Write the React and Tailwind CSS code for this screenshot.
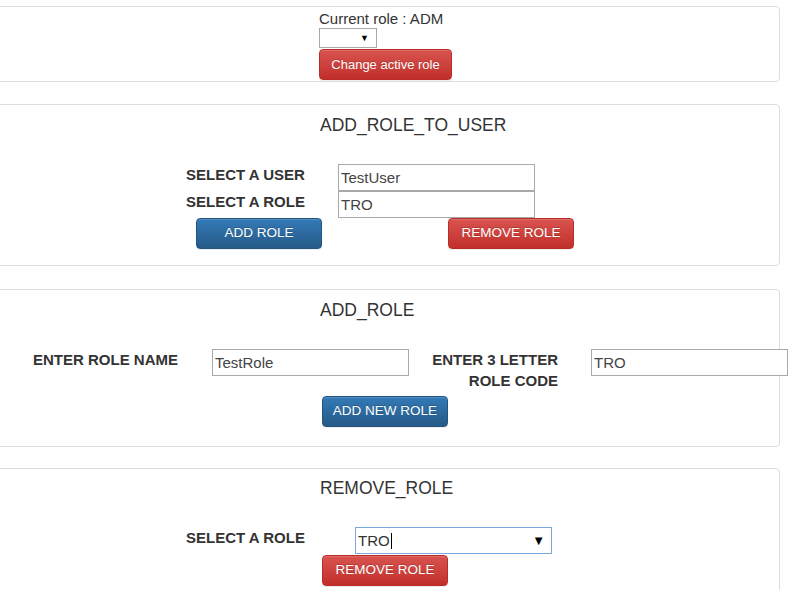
import React from 'react';

const btnBase =
  'shrink-0 h-[31px] w-[126px] rounded-[4px] border text-white text-[13.5px] flex items-center justify-center shadow-[inset_0_1px_0_rgba(255,255,255,0.15),0_1px_1px_rgba(0,0,0,0.075)] [text-shadow:0_-1px_0_rgba(0,0,0,0.2)]';
const red = 'bg-linear-to-b from-[#d9534f] to-[#c12e2a] border-[#b92c28]';
const blue = 'bg-linear-to-b from-[#337ab7] to-[#265a88] border-[#245580]';

const panel = 'ml-[-13px] w-[793px] border border-[#dddddd] rounded-[4px] pl-[12px]';
const field =
  'shrink-0 h-[27px] w-[197px] border border-[#a9a9a9] bg-white px-[2px] text-[15px] leading-[25px] text-[#444]';
const label = 'text-[15px] font-bold text-[#333] leading-[27px]';
const title = 'ml-[320px] text-[17.5px] leading-[20px] text-[#333]';

const App = () => {
  return (
    <div className="min-h-screen bg-white pt-[6px] font-['Liberation_Sans',Arial,sans-serif] text-[#333] overflow-hidden">
      {/* active role */}
      <div className={`${panel} h-[76px] pt-[2px] mb-[22px]`}>
        <div className="ml-[319px] flex flex-col items-start">
          <div className="text-[15px] leading-[19px]">Current role : ADM</div>
          <div className="relative h-[20px] w-[58px] border border-[#a9a9a9] bg-white">
            <span className="absolute right-[7px] top-[3px] text-[9px] leading-[12px] text-black">▼</span>
          </div>
          <button className={`${btnBase} ${red} mt-[1px] w-[133px] text-[13px]`}>Change active role</button>
        </div>
      </div>

      {/* add role to user */}
      <div className={`${panel} pt-[10px] pb-[16px] mb-[23px]`}>
        <div className={title}>ADD_ROLE_TO_USER</div>
        <div className="mt-[26px] ml-[186px] flex items-start">
          <div className="shrink-0 w-[152px] flex flex-col">
            <div className={label}>SELECT A USER</div>
            <div className={`${label} -mt-[0.5px]`}>SELECT A ROLE</div>
          </div>
          <div className="mt-[3px] flex flex-col">
            <div className={field}>TestUser</div>
            <div className={field}>TRO</div>
          </div>
        </div>
        <div className="ml-[196px] flex">
          <button className={`${btnBase} ${blue}`}>ADD ROLE</button>
          <button className={`${btnBase} ${red} ml-[126px]`}>REMOVE ROLE</button>
        </div>
      </div>

      {/* add role */}
      <div className={`${panel} pt-[10px] pb-[19px] mb-[21px]`}>
        <div className={title}>ADD_ROLE</div>
        <div className="mt-[29px] ml-[33px] flex items-start">
          <div className="shrink-0 w-[179px] text-[15px] font-bold leading-[21px]">ENTER ROLE NAME</div>
          <div className={field}>TestRole</div>
          <div className="shrink-0 w-[149px] text-right text-[15px] font-bold leading-[21px]">
            ENTER 3 LETTER ROLE CODE
          </div>
          <div className={`${field} ml-[33px]`}>TRO</div>
        </div>
        <div className="mt-[5px] ml-[322px]">
          <button className={`${btnBase} ${blue}`}>ADD NEW ROLE</button>
        </div>
      </div>

      {/* remove role */}
      <div className={`${panel} pt-[9px] pb-[20px]`}>
        <div className={title}>REMOVE_ROLE</div>
        <div className="mt-[29px] ml-[186px] flex items-start">
          <div className="shrink-0 w-[169px] text-[15px] font-bold leading-[21px]">SELECT A ROLE</div>
          <div className="relative shrink-0 h-[27px] w-[197px] border border-[#7ba7e1] bg-white pl-[2px] text-[15px] leading-[25px] text-[#333] flex items-center">
            <span>TRO</span>
            <span className="ml-[1px] h-[16px] w-px bg-black"></span>
            <span className="absolute right-[6px] top-[5px] text-[13px] leading-[16px] text-black">▼</span>
          </div>
        </div>
        <div className="mt-[1px] ml-[322px]">
          <button className={`${btnBase} ${red}`}>REMOVE ROLE</button>
        </div>
      </div>
    </div>
  );
};

export default App;
